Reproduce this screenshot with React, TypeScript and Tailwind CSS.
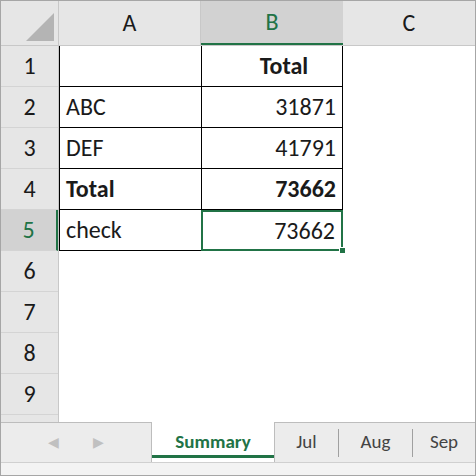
import React from "react";

const rows = [
  { a: "", b: "Total", bold: true, center: true },
  { a: "ABC", b: "31871" },
  { a: "DEF", b: "41791" },
  { a: "Total", b: "73662", bold: true, boldA: true },
  { a: "check", b: "73662" },
];

const App: React.FC = () => {
  return (
    <div
      className="w-[476px] h-[476px] bg-white border border-[#a6a6a6] flex flex-col overflow-hidden text-[#1a1a1a]"
      style={{ fontFamily: "Carlito, 'Open Sans', 'Liberation Sans', sans-serif" }}
    >
      {/* column headers */}
      <div className="flex h-[45px] shrink-0 bg-[#e6e6e6] border-b border-[#c8c8c8] text-[24px]">
        <div className="w-[58px] border-r border-[#c8c8c8] relative">
          <div className="absolute right-[4px] bottom-[4px] w-0 h-0 border-l-[28px] border-l-transparent border-b-[28px] border-b-[#b4b4b4]" />
        </div>
        <div className="w-[142px] flex items-center justify-center border-r border-[#c8c8c8]">A</div>
        <div className="w-[142px] flex items-center justify-center bg-[#d2d2d2] text-[#217346] border-b-2 border-[#217346]">B</div>
        <div className="flex-1 flex items-center justify-center">C</div>
      </div>
      <div className="flex flex-1">
        {/* row headers */}
        <div className="w-[58px] bg-[#e6e6e6] border-r border-[#c8c8c8] flex flex-col text-[24px]">
          {[1, 2, 3, 4, 5, 6, 7, 8, 9].map((n) => (
            <div
              key={n}
              className={`h-[41px] shrink-0 flex items-center justify-center border-b border-[#d4d4d4] ${n === 5 ? "bg-[#d2d2d2] text-[#217346] border-r-2 border-r-[#217346]" : ""}`}
            >
              {n}
            </div>
          ))}
          <div className="flex-1" />
        </div>
        {/* cells */}
        <div className="flex-1">
          {rows.map((r, i) => (
            <div key={i} className="flex h-[41px] text-[24px]">
              <div className={`w-[142px] flex items-center px-[6px] border-l border-b border-black ${r.boldA ? "font-bold" : ""}`}>
                {r.a}
              </div>
              <div
                className={`w-[142px] flex items-center px-[6px] relative ${r.center ? "justify-center pl-[30px]" : "justify-end"} ${r.bold ? "font-bold" : ""} ${i === 4 ? "border-2 border-[#217346]" : "border-l border-r border-b border-black"}`}
              >
                {r.b}
                {i === 4 && <div className="absolute -right-[5px] -bottom-[5px] w-[7px] h-[7px] bg-[#217346] border border-white" />}
              </div>
            </div>
          ))}
        </div>
      </div>
      {/* sheet tabs */}
      <div className="flex h-[40px] shrink-0 bg-[#ececec] border-t border-[#bdbdbd] text-[19px] text-[#444]">
        <div className="w-[150px] flex items-center justify-around px-[30px] text-[#c0c0c0] text-[14px]">
          <span>◀</span>
          <span>▶</span>
        </div>
        <div className="w-[124px] bg-white -mt-px border-x border-[#bdbdbd] flex items-center justify-center font-bold text-[#217346] relative">
          Summary
          <div className="absolute left-0 right-0 bottom-[4px] h-[3px] bg-[#217346]" />
        </div>
        <div className="w-[63px] flex items-center justify-center">Jul</div>
        <div className="w-px h-[28px] self-center bg-[#a0a0a0]" />
        <div className="w-[73px] flex items-center justify-center">Aug</div>
        <div className="w-px h-[28px] self-center bg-[#a0a0a0]" />
        <div className="flex-1 flex items-center justify-center">Sep</div>
      </div>
      <div className="h-[13px] shrink-0 bg-[#f3f3f3] border-t border-[#d0d0d0]" />
    </div>
  );
};

export default App;
